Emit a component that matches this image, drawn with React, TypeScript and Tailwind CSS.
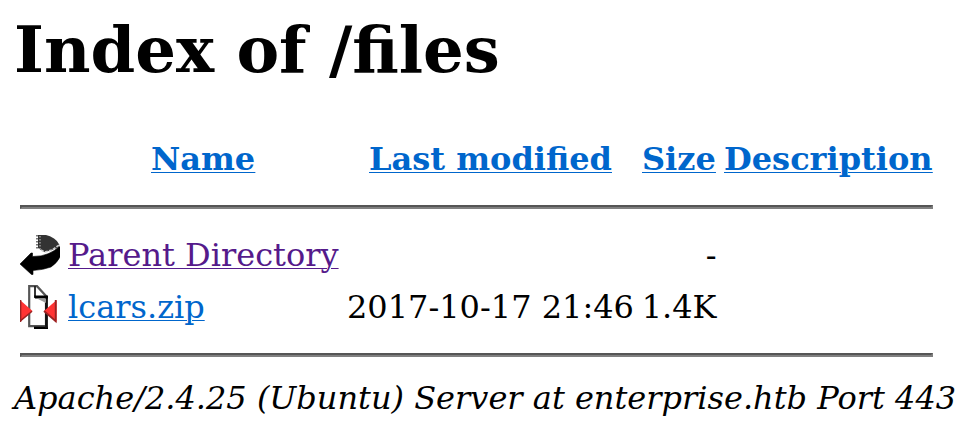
function BackIcon() {
  return (
    <svg width="40" height="44" viewBox="0 0 40 44" aria-hidden="true">
      <path d="M18 2H26Q30 2.5 34 5.5Q38 8 39.5 12L37 15L29 18L24 19L18 15Z" fill="#333" />
      <path d="M17 2V16" stroke="#777" strokeWidth="2" strokeDasharray="1.5 1.5" />
      <path d="M20 3V16" stroke="#aaa" strokeWidth="1.3" strokeDasharray="1.5 1.5" />
      <path d="M21 17L25 19L32 17L39 12" fill="none" stroke="#ccc" strokeWidth="1.6" strokeDasharray="3 1.3" />
      <path d="M0 31L11 20H12.5V23.5Q22 23.5 28 20.8Q35 18 39 13.5L40 14V24Q37 30 31 34Q23 37 13 37.5V41.5H11.5Z" fill="#000" stroke="#000" strokeWidth="0.6" strokeLinejoin="round" />
    </svg>
  );
}

function CompressedIcon() {
  return (
    <svg width="40" height="44" viewBox="0 0 40 44" aria-hidden="true">
      <path d="M9.2 1.2H17L26 11V41.2H9.2Z" fill="#fff" stroke="#555" strokeWidth="2.2" />
      <path d="M14 42.8H28" stroke="#000" strokeWidth="2.4" />
      <path d="M26.5 11V43" stroke="#111" strokeWidth="2.8" />
      <path d="M15 1V12H27" fill="none" stroke="#222" strokeWidth="1.8" />
      <path d="M14 10.5H28V13.5H15Z" fill="#000" />
      <path d="M17 13.5H26V18Z" fill="#999" />
      <path d="M0 15L12.5 26L0 37Z" fill="#f33" />
      <path d="M0 36.3L12 26.2M0.6 15V37" stroke="#922" strokeWidth="1.5" />
      <path d="M36.7 15L24 26L36.7 37Z" fill="#f33" />
      <path d="M24 26L35.7 36.2V15" fill="none" stroke="#922" strokeWidth="1.8" />
    </svg>
  );
}

function Rule() {
  return <hr className="h-1 border-2 border-t-[#555] border-r-[#808080] border-b-[#808080] border-l-[#555]" />;
}

const columns = "grid grid-cols-[48px_279px_294.5px_75px_216px] whitespace-nowrap";

export default function App() {
  return (
    <main className="h-[429px] w-[970px] overflow-hidden bg-white font-['DejaVu_Serif',serif] text-[32px] leading-[38px] text-black">
      <h1 className="pt-[12px] pl-[14px] text-[64px] leading-[76px] font-bold whitespace-nowrap">Index of /files</h1>
      <div className="ml-[20px] w-[913px] pt-[52px]">
        <div className="grid h-[38px] grid-cols-[327px_265px_105px_216px] font-bold whitespace-nowrap text-[#0066cc] underline decoration-1 underline-offset-2">
          <a className="pl-[131px]">Name</a>
          <a className="pl-[22px]">Last modified</a>
          <a className="pl-[30px]">Size</a>
          <a className="pl-[7px]">Description</a>
        </div>
        <div className="pt-[27px]"><Rule /></div>
        <div className={`${columns} h-[52px] pt-[24px] box-content`}>
          <BackIcon />
          <a className="pt-[3px] text-[#551a8b] underline decoration-1 underline-offset-2">Parent Directory</a>
          <span />
          <span className="pt-[3px] text-right">-</span>
        </div>
        <div className={`${columns} h-[44px]`}>
          <CompressedIcon />
          <a className="pt-[3px] text-[#0066cc] underline decoration-1 underline-offset-2">lcars.zip</a>
          <span className="pt-[3px]">2017-10-17 21:46</span>
          <span className="pt-[3px] text-right">1.4K</span>
        </div>
        <div className="pt-[24px]"><Rule /></div>
      </div>
      <address className="pt-[22px] pl-[14px] whitespace-nowrap italic">Apache/2.4.25 (Ubuntu) Server at enterprise.htb Port 443</address>
    </main>
  );
}
